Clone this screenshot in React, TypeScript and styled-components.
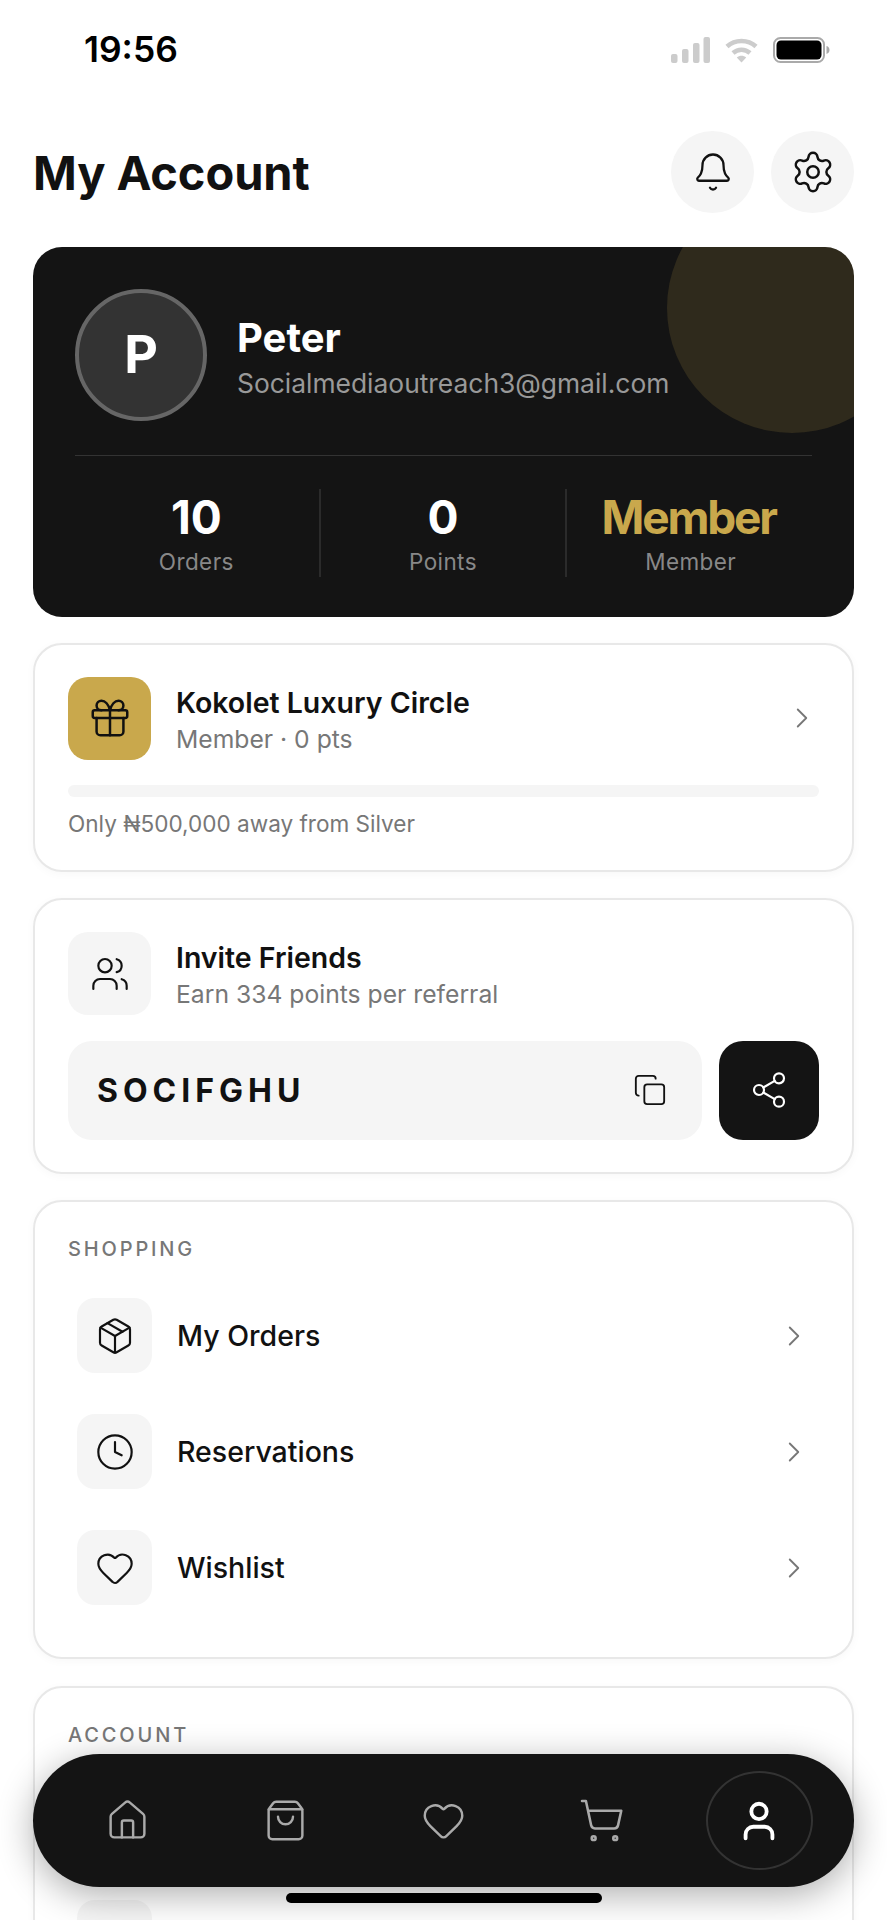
import React from 'react';
import styled, { createGlobalStyle } from 'styled-components';
import {
  Bell,
  ChevronRight,
  Clock,
  Copy,
  Gift,
  Heart,
  House,
  Package,
  Settings,
  Share2,
  ShoppingBag,
  ShoppingCart,
  User,
  Users,
} from 'lucide-react';

const GlobalStyle = createGlobalStyle`
  html, body {
    margin: 0;
    padding: 0;
    height: 1920px;
    overflow: hidden;
    background: #fff;
    font-family: 'Inter', 'Liberation Sans', sans-serif;
    color: #111;
  }
  * {
    box-sizing: border-box;
  }
`;

const Screen = styled.div`
  width: 887px;
  height: 1920px;
  overflow: hidden;
  background: #fff;
`;

const StatusBar = styled.div`
  height: 100px;
  padding: 0 57px 0 84px;
  display: flex;
  justify-content: space-between;
  align-items: center;
`;

const Time = styled.span`
  font-size: 35.4px;
  font-weight: 600;
  line-height: 40px;
  color: #000;
`;

const StatusIcons = styled.div`
  display: flex;
  align-items: center;
  gap: 15px;
`;

const Content = styled.main`
  padding: 31px 33px 0;
  display: flex;
  flex-direction: column;
`;

const Header = styled.header`
  height: 82px;
  margin-bottom: 34px;
  display: flex;
  justify-content: space-between;
  align-items: center;
`;

const Title = styled.h1`
  margin: 0;
  font-size: 47px;
  font-weight: 700;
  letter-spacing: -0.1px;
  color: #111;
`;

const HeaderActions = styled.div`
  display: flex;
  gap: 17px;
`;

const RoundButton = styled.button`
  width: 83px;
  height: 82px;
  padding: 0;
  border: 0;
  border-radius: 50%;
  background: #f5f5f5;
  color: #111;
  display: flex;
  align-items: center;
  justify-content: center;
`;

const HeroCard = styled.section`
  position: relative;
  overflow: hidden;
  height: 370px;
  margin-bottom: 25.5px;
  padding: 41px 42px 0;
  border-radius: 29px;
  background: #141414;
`;

const HeroGlow = styled.div`
  position: absolute;
  top: -64px;
  right: -63px;
  width: 250px;
  height: 250px;
  border-radius: 50%;
  background: rgba(201, 168, 76, 0.15);
`;

const Profile = styled.div`
  position: relative;
  display: flex;
  align-items: center;
  gap: 30px;
  height: 133px;
`;

const Avatar = styled.div`
  width: 132px;
  height: 132px;
  flex: none;
  border: 4px solid #666;
  border-radius: 50%;
  background: #333;
  color: #fff;
  font-size: 52px;
  font-weight: 700;
  display: flex;
  align-items: center;
  justify-content: center;
`;

const ProfileText = styled.div`
  padding-top: 4px;
  display: flex;
  flex-direction: column;
  gap: 6px;
`;

const Name = styled.div`
  font-size: 40px;
  line-height: 46px;
  font-weight: 700;
  color: #fff;
`;

const Email = styled.div`
  font-size: 26.4px;
  line-height: 32px;
  color: #999;
`;

const HeroDivider = styled.div`
  height: 1px;
  margin-top: 34px;
  background: #333;
`;

const Stats = styled.div`
  display: grid;
  grid-template-columns: repeat(3, 1fr);
  margin: 33px -2px 0 -1px;
`;

const Stat = styled.div<{ $divided?: boolean }>`
  height: 88px;
  border-right: ${(p) => (p.$divided ? '2px solid #2b2b2b' : '0')};
  display: flex;
  flex-direction: column;
  align-items: center;
`;

const StatValue = styled.div<{ $gold?: boolean }>`
  margin-right: ${(p) => (p.$gold ? '4px' : '0')};
  font-size: 46px;
  line-height: 56px;
  font-weight: 700;
  letter-spacing: ${(p) => (p.$gold ? '-2.2px' : '0')};
  color: ${(p) => (p.$gold ? '#c9a84c' : '#fff')};
`;

const StatLabel = styled.div`
  margin-top: 3px;
  font-size: 22.5px;
  line-height: 28px;
  letter-spacing: 0.4px;
  color: #888;
`;

const Card = styled.section`
  margin-bottom: 26.5px;
  padding: 32px 33px;
  border: 2px solid #e8e8e8;
  border-radius: 29px;
  background: #fff;
  box-shadow: 0 2px 10px rgba(0, 0, 0, 0.03);
`;

const CardHead = styled.div`
  display: flex;
  align-items: center;
  gap: 25px;
`;

const IconTile = styled.div<{ $gold?: boolean }>`
  width: 83px;
  height: 83px;
  flex: none;
  border-radius: 20px;
  background: ${(p) => (p.$gold ? '#c9a84c' : '#f5f5f5')};
  color: #111;
  display: flex;
  align-items: center;
  justify-content: center;
`;

const HeadText = styled.div`
  flex: 1;
  padding-top: 4px;
  display: flex;
  flex-direction: column;
  gap: 1px;
`;

const CardTitle = styled.div`
  font-size: 28.5px;
  line-height: 36px;
  font-weight: 600;
  color: #111;
`;

const CardSub = styled.div`
  font-size: 24.7px;
  line-height: 34px;
  color: #777;
`;

const Chevron = styled(ChevronRight)`
  flex: none;
  color: #777;
`;

const ProgressTrack = styled.div`
  height: 12px;
  margin-top: 25px;
  border-radius: 6px;
  background: #f5f5f5;
`;

const ProgressNote = styled.div`
  margin-top: 13px;
  font-size: 22.55px;
  line-height: 28px;
  color: #777;
`;

const CodeRow = styled.div`
  display: flex;
  gap: 17px;
  margin-top: 25.5px;
`;

const CodeBox = styled.div`
  flex: 1;
  height: 99px;
  padding: 0 35px 0 29px;
  border-radius: 24px;
  background: #f5f5f5;
  display: flex;
  align-items: center;
  justify-content: space-between;
`;

const CodeText = styled.span`
  font-size: 32px;
  font-weight: 700;
  letter-spacing: 5px;
  color: #111;
`;

const ShareButton = styled.button`
  width: 100px;
  height: 99px;
  flex: none;
  padding: 0;
  border: 0;
  border-radius: 24px;
  background: #141414;
  color: #fff;
  display: flex;
  align-items: center;
  justify-content: center;
`;

const SectionLabel = styled.div`
  margin-top: 2px;
  font-size: 20px;
  line-height: 26px;
  font-weight: 500;
  letter-spacing: 2.85px;
  color: #777;
`;

const RowList = styled.div`
  display: flex;
  flex-direction: column;
  gap: 41px;
  margin-top: 36px;
  padding-bottom: 20px;
`;

const Row = styled.div`
  display: flex;
  align-items: center;
  padding: 0 8px 0 9px;
`;

const RowIcon = styled.div`
  width: 75px;
  height: 75px;
  flex: none;
  border-radius: 18px;
  background: #f5f5f5;
  color: #111;
  display: flex;
  align-items: center;
  justify-content: center;
`;

const RowLabel = styled.div`
  flex: 1;
  margin-left: 25px;
  font-size: 28.5px;
  font-weight: 500;
  color: #111;
`;

const BottomNav = styled.nav`
  position: fixed;
  left: 33px;
  top: 1754px;
  width: 821px;
  height: 133px;
  padding: 0 16px;
  border-radius: 67px;
  background: #141414;
  box-shadow: 0 8px 36px rgba(0, 0, 0, 0.32);
  display: grid;
  grid-template-columns: repeat(5, 1fr);
  align-items: center;
  justify-items: center;
`;

const NavItem = styled.div<{ $active?: boolean }>`
  width: 107px;
  height: 99px;
  border-radius: 50%;
  border: ${(p) => (p.$active ? '2px solid #333' : '0')};
  color: ${(p) => (p.$active ? '#fff' : '#aaa')};
  display: flex;
  align-items: center;
  justify-content: center;
`;

const HomeIndicator = styled.div`
  position: fixed;
  left: 286px;
  top: 1893px;
  width: 316px;
  height: 10px;
  border-radius: 5px;
  background: #000;
`;

const SignalIcon = () => (
  <svg width="39" height="26" viewBox="0 0 39 26" fill="#ccc">
    <rect x="0" y="17" width="6.5" height="9" rx="2" />
    <rect x="11" y="12" width="6.5" height="14" rx="2" />
    <rect x="22" y="6" width="6.5" height="20" rx="2" />
    <rect x="32.5" y="0" width="6.5" height="26" rx="2" />
  </svg>
);

const WifiIcon = () => (
  <svg width="33" height="26" viewBox="0 0 33 26" fill="none" stroke="#ccc" strokeWidth="4.5">
    <path d="M2 9.5C10 2 23 2 31 9.5" />
    <path d="M8 16c5-4.5 12-4.5 17 0" />
    <path d="M16.500 25.500 11.800 20.500c2.700-2.300 6.700-2.300 9.400 0z" fill="#ccc" stroke="none" />
  </svg>
);

const BatteryIcon = () => (
  <svg width="57" height="26" viewBox="0 0 57 26">
    <rect x="1" y="1" width="50" height="24" rx="6.5" fill="#fff" stroke="#aaa" strokeWidth="2" />
    <rect x="3.500" y="3.500" width="45" height="19" rx="4.500" fill="#000" />
    <path d="M53.500 9c2 .6 3 2.200 3 4s-1 3.400-3 4z" fill="#aaa" />
  </svg>
);

const shoppingRows = [
  { label: 'My Orders', icon: <Package size={40} strokeWidth={1.3} /> },
  { label: 'Reservations', icon: <Clock size={40} strokeWidth={1.3} /> },
  { label: 'Wishlist', icon: <Heart size={40} strokeWidth={1.3} /> },
];

const App = () => {
  return (
    <Screen>
      <GlobalStyle />
      <StatusBar>
        <Time>19:56</Time>
        <StatusIcons>
          <SignalIcon />
          <WifiIcon />
          <BatteryIcon />
        </StatusIcons>
      </StatusBar>

      <Content>
        <Header>
          <Title>My Account</Title>
          <HeaderActions>
            <RoundButton>
              <Bell size={42} strokeWidth={1.3} />
            </RoundButton>
            <RoundButton>
              <Settings size={46} strokeWidth={1.3} />
            </RoundButton>
          </HeaderActions>
        </Header>

        <HeroCard>
          <HeroGlow />
          <Profile>
            <Avatar>P</Avatar>
            <ProfileText>
              <Name>Peter</Name>
              <Email>Socialmediaoutreach3@gmail.com</Email>
            </ProfileText>
          </Profile>
          <HeroDivider />
          <Stats>
            <Stat $divided>
              <StatValue>10</StatValue>
              <StatLabel>Orders</StatLabel>
            </Stat>
            <Stat $divided>
              <StatValue>0</StatValue>
              <StatLabel>Points</StatLabel>
            </Stat>
            <Stat>
              <StatValue $gold>Member</StatValue>
              <StatLabel>Member</StatLabel>
            </Stat>
          </Stats>
        </HeroCard>

        <Card>
          <CardHead>
            <IconTile $gold>
              <Gift size={46} strokeWidth={1.3} />
            </IconTile>
            <HeadText>
              <CardTitle>Kokolet Luxury Circle</CardTitle>
              <CardSub>Member · 0 pts</CardSub>
            </HeadText>
            <Chevron size={34} strokeWidth={1.3} />
          </CardHead>
          <ProgressTrack />
          <ProgressNote>Only ₦500,000 away from Silver</ProgressNote>
        </Card>

        <Card>
          <CardHead>
            <IconTile>
              <Users size={40} strokeWidth={1.3} />
            </IconTile>
            <HeadText>
              <CardTitle>Invite Friends</CardTitle>
              <CardSub>Earn 334 points per referral</CardSub>
            </HeadText>
          </CardHead>
          <CodeRow>
            <CodeBox>
              <CodeText>SOCIFGHU</CodeText>
              <Copy size={34} strokeWidth={1.3} />
            </CodeBox>
            <ShareButton>
              <Share2 size={40} strokeWidth={1.3} />
            </ShareButton>
          </CodeRow>
        </Card>

        <Card>
          <SectionLabel>SHOPPING</SectionLabel>
          <RowList>
            {shoppingRows.map((row) => (
              <Row key={row.label}>
                <RowIcon>{row.icon}</RowIcon>
                <RowLabel>{row.label}</RowLabel>
                <Chevron size={34} strokeWidth={1.3} />
              </Row>
            ))}
          </RowList>
        </Card>

        <Card>
          <SectionLabel>ACCOUNT</SectionLabel>
          <RowList>
            <Row>
              <RowIcon />
            </Row>
            <Row>
              <RowIcon />
            </Row>
          </RowList>
        </Card>
      </Content>

      <BottomNav>
        <NavItem>
          <House size={45} strokeWidth={1.3} />
        </NavItem>
        <NavItem>
          <ShoppingBag size={45} strokeWidth={1.3} />
        </NavItem>
        <NavItem>
          <Heart size={45} strokeWidth={1.3} />
        </NavItem>
        <NavItem>
          <ShoppingCart size={47} strokeWidth={1.3} />
        </NavItem>
        <NavItem $active>
          <User size={46} strokeWidth={2} />
        </NavItem>
      </BottomNav>
      <HomeIndicator />
    </Screen>
  );
};

export default App;
